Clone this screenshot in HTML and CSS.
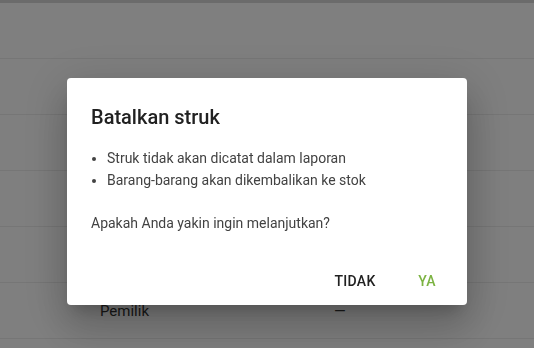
FILE: index.html
```html
<!DOCTYPE html>
<html lang="id">
<head>
  <meta charset="UTF-8">
  <meta name="viewport" content="width=device-width, initial-scale=1.0">
  <title>Batalkan struk</title>
  <link rel="stylesheet" href="styles.css">
</head>
<body>
  <div class="page">
    <div class="topbar"></div>
    <div class="header"></div>
    <div class="row"></div>
    <div class="row"></div>
    <div class="row"></div>
    <div class="row"></div>
    <div class="row">
      <span class="row-label">Pemilik</span>
      <span class="row-value">&mdash;</span>
    </div>
  </div>

  <!-- Cancel receipt dialog -->
  <div class="overlay">
    <div class="dialog">
      <h2 class="dialog-title">Batalkan struk</h2>
      <div class="dialog-content">
        <ul class="dialog-list">
          <li>Struk tidak akan dicatat dalam laporan</li>
          <li>Barang-barang akan dikembalikan ke stok</li>
        </ul>
        <p class="dialog-question">Apakah Anda yakin ingin melanjutkan?</p>
      </div>
      <div class="dialog-actions">
        <button class="btn">TIDAK</button>
        <button class="btn btn-primary">YA</button>
      </div>
    </div>
  </div>
</body>
</html>
```

FILE: styles.css
```css
body {
  font-family: Roboto, "Liberation Sans", sans-serif;
  background: #fff;
  color: #212121;
  margin: 0;
  padding: 0;
  height: 100vh;
  overflow: hidden;
}
.topbar {
  height: 3px;
  background-color: #d6d6d6;
}
.header {
  height: 55px;
  border-bottom: 1px solid #ececec;
}
.row {
  height: 55px;
  border-bottom: 1px solid #ececec;
  display: flex;
  align-items: center;
  font-size: 15px;
  color: #333;
}
.row-label {
  width: 234px;
  padding-left: 100px;
}
.overlay {
  position: fixed;
  top: 0;
  left: 0;
  width: 100%;
  height: 100%;
  background-color: rgba(0, 0, 0, 0.5);
  display: flex;
  justify-content: center;
  align-items: flex-start;
  padding-top: 78px;
  box-sizing: border-box;
}
.dialog {
  width: 400px;
  height: 227px;
  box-sizing: border-box;
  background-color: #fff;
  border-radius: 4px;
  box-shadow: 0 11px 15px -7px rgba(0, 0, 0, 0.2), 0 24px 38px 3px rgba(0, 0, 0, 0.14), 0 9px 46px 8px rgba(0, 0, 0, 0.12);
  display: flex;
  flex-direction: column;
}
.dialog-title {
  margin: 0;
  padding: 24px 24px 0;
  font-size: 20px;
  font-weight: 500;
  line-height: 30px;
  color: #212121;
}
.dialog-content {
  padding: 15px 24px 0;
  font-size: 14px;
  color: #424242;
  flex: 1;
}
.dialog-list {
  margin: 0;
  padding-left: 16px;
  line-height: 22px;
}
.dialog-question {
  margin: 21px 0 0;
  line-height: 22px;
}
.dialog-actions {
  display: flex;
  justify-content: flex-end;
  gap: 8px;
  padding: 10px 8px 6px;
}
.btn {
  min-width: 64px;
  height: 36px;
  padding: 0 8px;
  border: none;
  border-radius: 4px;
  background: none;
  font-family: inherit;
  font-size: 14px;
  font-weight: 500;
  letter-spacing: 0.3px;
  color: #212121;
  cursor: pointer;
}
.btn-primary {
  color: #7cb342;
}
```
